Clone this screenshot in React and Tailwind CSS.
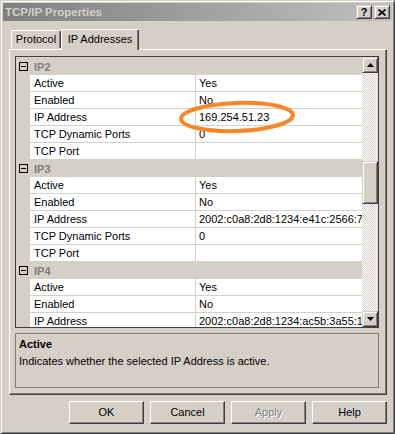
import React from 'react'

const SECTIONS = [
  {
    name: 'IP2',
    rows: [
      ['Active', 'Yes'],
      ['Enabled', 'No'],
      ['IP Address', '169.254.51.23'],
      ['TCP Dynamic Ports', '0'],
      ['TCP Port', ''],
    ],
  },
  {
    name: 'IP3',
    rows: [
      ['Active', 'Yes'],
      ['Enabled', 'No'],
      ['IP Address', '2002:c0a8:2d8:1234:e41c:2566:7a3b'],
      ['TCP Dynamic Ports', '0'],
      ['TCP Port', ''],
    ],
  },
  {
    name: 'IP4',
    rows: [
      ['Active', 'Yes'],
      ['Enabled', 'No'],
      ['IP Address', '2002:c0a8:2d8:1234:ac5b:3a55:1c2d'],
      ['TCP Dynamic Ports', '0'],
      ['TCP Port', ''],
    ],
  },
]

// raised 3d box used by scrollbar and caption buttons
const bevel =
  'border border-t-[#d4d0c8] border-l-[#d4d0c8] border-r-[#404040] border-b-[#404040] shadow-[inset_1px_1px_#ffffff,inset_-1px_-1px_#808080] bg-[#d4d0c8]'

function Arrow({ down }) {
  return (
    <svg width="7" height="4" viewBox="0 0 7 4">
      <polygon points={down ? '0,0 7,0 3.5,4' : '0,4 7,4 3.5,0'} fill="#000" />
    </svg>
  )
}

function Header({ name }) {
  return (
    <div className="flex h-[17px] bg-[#d4d0c8] items-center">
      <div className="w-[14px] h-full flex items-center justify-center">
        <div className="w-[9px] h-[9px] border border-black bg-[#d4d0c8] flex items-center justify-center ml-[1px]">
          <div className="w-[5px] h-[1px] bg-black" />
        </div>
      </div>
      <span className="pl-[4px] pt-[1px] font-bold text-[#808080] leading-[17px]">{name}</span>
    </div>
  )
}

function Row({ label, value }) {
  return (
    <div className="flex h-[17px]">
      <div className="w-[14px] bg-[#d4d0c8]" />
      <div className="w-[165px] bg-white border-b border-[#d4d0c8] pl-[4px] leading-[16px] whitespace-nowrap">
        {label}
      </div>
      <div className="w-[1px] bg-[#d4d0c8]" />
      <div className="flex-1 min-w-0 bg-white border-b border-[#d4d0c8] pl-[3px] leading-[16px] whitespace-nowrap overflow-hidden">
        {value}
      </div>
    </div>
  )
}

function Button({ children, disabled }) {
  return (
    <div className="w-[75px] h-[23px] bg-[#d4d0c8] border border-t-white border-l-white border-r-[#404040] border-b-[#404040] shadow-[inset_-1px_-1px_#808080] flex items-center justify-center">
      <span
        className={
          disabled
            ? 'text-[#808080] [text-shadow:1px_1px_#ffffff]'
            : 'text-black'
        }
      >
        {children}
      </span>
    </div>
  )
}

export default function App() {
  return (
    <div className="w-[395px] h-[434px] bg-[#d4d0c8] border border-t-[#d4d0c8] border-l-[#d4d0c8] border-r-[#404040] border-b-[#404040] shadow-[inset_1px_1px_#ffffff,inset_-1px_-1px_#808080] p-[2px] relative overflow-hidden font-['Liberation_Sans',Arial,sans-serif] text-[11px] text-black">
      {/* Title bar (inactive) */}
      <div className="h-[18px] bg-linear-to-r from-[#808080] to-[#c0c0c0] flex items-center justify-between pl-[2px] pr-[2px]">
        <span className="font-bold text-[#d4d0c8] text-[11.5px] leading-[18px]">TCP/IP Properties</span>
        <div className="flex gap-[2px]">
          <div className={`w-[16px] h-[14px] ${bevel} flex items-center justify-center`}>
            <span className="font-bold text-[11px] leading-none text-black">?</span>
          </div>
          <div className={`w-[16px] h-[14px] ${bevel} flex items-center justify-center`}>
            <svg width="8" height="7" viewBox="0 0 8 7">
              <path d="M0.5 0.5 L7.5 6.5 M7.5 0.5 L0.5 6.5" stroke="#000" strokeWidth="1.6" />
            </svg>
          </div>
        </div>
      </div>

      {/* Tabs */}
      <div className="h-[28px] flex items-end pl-[8px] relative z-10">
        <div className="w-[50px] h-[18px] border-t border-l border-white border-r border-r-[#404040] rounded-tl-[2px] rounded-tr-[2px] shadow-[inset_-1px_0_#808080] flex items-center justify-center mb-px">
          Protocol
        </div>
        <div className="w-[78px] h-[21px] -mb-px bg-[#d4d0c8] border-t border-l border-white border-r border-r-[#404040] rounded-tl-[2px] rounded-tr-[2px] shadow-[inset_-1px_0_#808080] flex items-center justify-center pb-[2px]">
          IP Addresses
        </div>
      </div>

      {/* Tab page */}
      <div className="ml-[6px] w-[378px] h-[346px] border border-t-white border-l-white border-r-[#404040] border-b-[#404040] shadow-[inset_-1px_-1px_#808080] pl-[5px] pt-[6px]">
        {/* Property grid */}
        <div className="w-[364px] h-[272px] border border-[#404040] flex overflow-hidden">
          <div className="w-[346px] overflow-hidden pt-[1px]">
            {SECTIONS.map((s) => (
              <div key={s.name}>
                <Header name={s.name} />
                {s.rows.map(([l, v]) => (
                  <Row key={l} label={l} value={v} />
                ))}
              </div>
            ))}
          </div>
          <div className="w-[16px] flex flex-col">
            <div className={`h-[16px] ${bevel} flex items-center justify-center`}>
              <Arrow />
            </div>
            <div className="flex-1 flex flex-col bg-[repeating-conic-gradient(#d4d0c8_0_25%,#ffffff_0_50%)] bg-[length:2px_2px]">
              <div className="h-[88px]" />
              <div className={`h-[43px] ${bevel}`} />
            </div>
            <div className={`h-[16px] ${bevel} flex items-center justify-center`}>
              <Arrow down />
            </div>
          </div>
        </div>

        {/* Description */}
        <div className="mt-[5px] w-[364px] h-[55px] border border-[#808080] pl-[3px] pt-[3px]">
          <div className="font-bold leading-[14px]">Active</div>
          <div className="leading-[14px] mt-[3px]">Indicates whether the selected IP Address is active.</div>
        </div>
      </div>

      {/* Buttons */}
      <div className="ml-[6px] w-[378px] mt-[6px] flex justify-end gap-[6px]">
        <Button>OK</Button>
        <Button>Cancel</Button>
        <Button disabled>Apply</Button>
        <Button>Help</Button>
      </div>

      {/* Orange annotation */}
      <svg className="absolute left-[176px] top-[97px] pointer-events-none" width="122" height="38" viewBox="0 0 122 38">
        <ellipse cx="60" cy="19" rx="56" ry="14" fill="none" stroke="#fb8527" strokeWidth="4" transform="rotate(-2 60 19)" />
      </svg>
    </div>
  )
}
